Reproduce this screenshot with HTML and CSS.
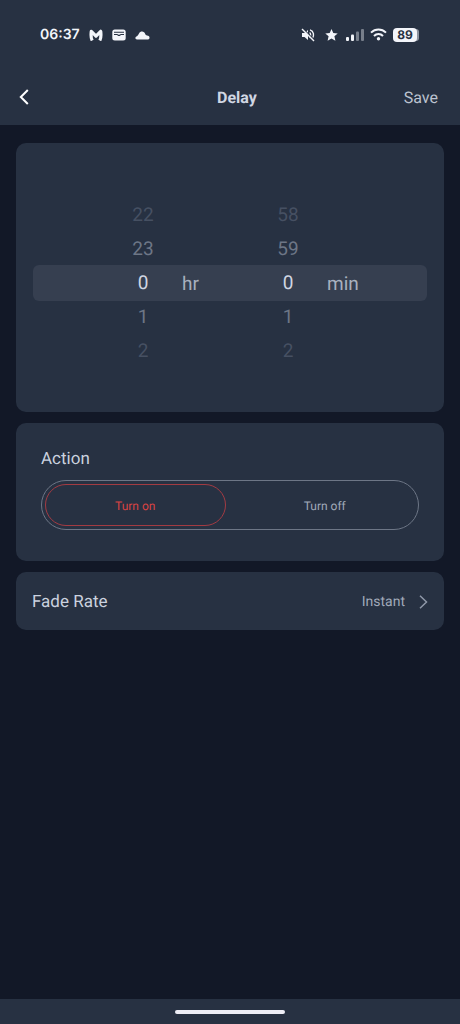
FILE: index.html
```html
<!DOCTYPE html>
<html lang="en">
<head>
<meta charset="utf-8">
<meta name="viewport" content="width=device-width, initial-scale=1">
<title>Delay</title>
<link rel="stylesheet" href="styles.css">
</head>
<body>
<header class="top">
  <div class="status">
    <div class="status-left">
      <span class="clock">06:37</span>
      <svg width="14" height="12" viewBox="0 0 14 12" fill="none" stroke="currentColor" stroke-width="3.200" stroke-linejoin="round"><path d="M3.200 11.500C1.800 9 1.900 5.500 2.300 2.300L7 7.200l4.700-4.900c.4 3.200.5 6.700-.9 9.200"/></svg>
      <svg width="14" height="12" viewBox="0 0 14 12"><rect x=".3" y=".5" width="13.400" height="11" rx="2.500" fill="currentColor"/><path d="M2 3.300h10M2 5.500h3c1 0 1 1 2 1s1-1 2-1h3" fill="none" stroke="#273142" stroke-width="1.100"/></svg>
      <svg width="15" height="10" viewBox="0 0 15 10" fill="currentColor"><path d="M2 9.500C-.2 9.300-.1 6.600 2 6.200 2.600 5.900 3.200 5 4 3.500 5.500.6 9.500 1 10.300 4.200c.4.900 1.400 1.300 2.700 1.600 2 .5 2 3.500 0 3.700z"/></svg>
    </div>
    <div class="status-right">
      <svg width="14" height="14" viewBox="0 0 14 14" fill="none" stroke="currentColor" stroke-width="1.400"><path d="M1 5h2.500L7 2v10L3.500 9H1z" fill="currentColor" stroke="none"/><path d="M8.600 4.500c1.400 1 1.400 4 0 5M9 1.800c4 1.300 4.300 6 2.400 8.400"/><path d="M2 .6l12 12" stroke="#273142" stroke-width="1.200"/><path d="M1 1l12 12"/></svg>
      <svg class="star" width="13" height="12" viewBox="0 0 13 12" fill="currentColor"><path d="M6.500 0l1.800 4 4.400.4-3.300 2.900 1 4.400-3.900-2.300-3.900 2.300 1-4.400L.3 4.400 4.700 4z"/></svg>
      <svg class="signal" width="18" height="12" viewBox="0 0 18 12" fill="currentColor"><rect y="8" width="3" height="4" rx="1"/><rect x="5" y="5.500" width="3" height="6.500" rx="1"/><rect x="10" y="2.500" width="3" height="9.500" rx="1" opacity=".4"/><rect x="15" width="3" height="12" rx="1" opacity=".4"/></svg>
      <svg class="wifi" width="17" height="13" viewBox="0 0 17 13" fill="none" stroke="currentColor" stroke-width="2"><path d="M1 4.600c4.300-4.200 10.700-4.200 15 0M4 8c2.500-2.600 6.500-2.600 9 0"/><circle cx="8.500" cy="10.800" r="1.700" fill="currentColor" stroke="none"/></svg>
      <span class="battery">89</span>
    </div>
  </div>
  <nav class="bar">
    <button class="back" type="button" aria-label="Back"><svg width="10" height="16" viewBox="0 0 10 16" fill="none" stroke="currentColor" stroke-width="2"><path d="M8.800 1L1.800 8l7 7"/></svg></button>
    <h1 class="title">Delay</h1>
    <button class="save" type="button">Save</button>
  </nav>
</header>
<main class="content">
  <section class="card picker" aria-label="Delay time">
    <div class="wheels">
      <div class="wheel">
        <ul class="values" aria-label="Hours"><li class="far">22</li><li class="near">23</li><li class="current">0</li><li class="near">1</li><li class="far">2</li></ul>
        <span class="unit">hr</span>
      </div>
      <div class="wheel">
        <ul class="values" aria-label="Minutes"><li class="far">58</li><li class="near">59</li><li class="current">0</li><li class="near">1</li><li class="far">2</li></ul>
        <span class="unit">min</span>
      </div>
    </div>
  </section>
  <section class="card action">
    <h2 class="label" id="action-label">Action</h2>
    <div class="segments" role="radiogroup" aria-labelledby="action-label">
      <label class="segment"><input type="radio" name="action" value="on" checked><span>Turn on</span></label>
      <label class="segment"><input type="radio" name="action" value="off"><span>Turn off</span></label>
    </div>
  </section>
  <button class="card fade" type="button">
    <span class="label">Fade Rate</span>
    <span class="value">Instant</span>
    <svg width="9" height="14" viewBox="0 0 9 14" fill="none" stroke="currentColor" stroke-width="1.500"><path d="M1 .8L7.500 7 1 13.200"/></svg>
  </button>
</main>
<footer class="home"><div class="handle"></div></footer>
</body>
</html>
```
FILE: styles.css
```css
* {
  box-sizing: border-box;
}

body {
  margin: 0;
  min-height: 100vh;
  display: flex;
  flex-direction: column;
  background: #121827;
  color: #d0d6e2;
  font-family: Roboto, sans-serif;
  text-rendering: geometricPrecision;
}

button {
  border: 0;
  padding: 0;
  background: none;
  color: inherit;
  font: inherit;
  text-rendering: inherit;
  cursor: pointer;
}

h1,
h2,
ul {
  margin: 0;
  padding: 0;
  font-weight: 400;
  list-style: none;
}

svg {
  display: block;
  flex: none;
}

.top,
.home {
  background: #273142;
}

.status {
  height: 69px;
  padding: 0 43px 0 40px;
  display: flex;
  align-items: center;
  justify-content: space-between;
  color: #f3f5fa;
}

.status-left,
.status-right {
  display: flex;
  align-items: center;
}

.status-left {
  gap: 9px;
}

.clock {
  font: 600 14px/20px Inter, sans-serif;
}

.star {
  margin-left: 10px;
}

.signal {
  margin-left: 8px;
}

.wifi {
  margin: 0 6px;
}

.battery {
  width: 24px;
  border-radius: 4px;
  background: #f3f5fa;
  box-shadow: 3px 0 0 -1px #8c93a0;
  color: #273142;
  font: 700 12px/14px Inter, sans-serif;
  text-align: center;
}

.bar {
  height: 56px;
  padding-right: 22px;
  display: flex;
  align-items: center;
  justify-content: space-between;
}

.back {
  width: 70px;
  height: 56px;
  padding-left: 19px;
  color: #fff;
}

.title,
.save {
  padding-top: 2px;
  font-size: 16px;
  line-height: 24px;
}

.title {
  font-weight: 700;
}

.save {
  color: #bcc3d0;
}

.content {
  flex: 1;
  padding: 18px 16px;
  display: flex;
  flex-direction: column;
  gap: 11px;
}

.card {
  border-radius: 10px;
  background: #273142;
}

.picker {
  padding: 55px 17px 44px;
}

.wheels {
  position: relative;
  display: flex;
  justify-content: center;
}

.wheels::before {
  content: "";
  position: absolute;
  inset: 67px 0;
  border-radius: 6px;
  background: #363f50;
}

.wheel {
  position: relative;
  width: 145px;
  padding-left: 39px;
  display: flex;
  align-items: center;
  gap: 20px;
  font-size: 19px;
  line-height: 34px;
}

.values {
  width: 38px;
  text-align: center;
}

.near {
  color: #6d7686;
}

.far {
  color: #465062;
}

.unit {
  padding-top: 2px;
  color: #a8b0be;
}

.action {
  padding: 24px 25px 31px;
}

.label {
  font-size: 17px;
  line-height: 24px;
  color: #cbd2df;
}

.segments {
  height: 50px;
  margin-top: 9px;
  padding: 3px;
  display: flex;
  gap: 9px;
  border: 1px solid #6d7686;
  border-radius: 25px;
}

.segment {
  flex: 1;
  padding-top: 2px;
  display: flex;
  align-items: center;
  justify-content: center;
  border: 1px solid transparent;
  border-radius: 21px;
  color: #a0a9b9;
  font-size: 12px;
  line-height: 20px;
  cursor: pointer;
}

.segment input {
  position: absolute;
  opacity: 0;
}

.segment:has(input:checked) {
  border-color: #a33b42;
  color: #d94343;
}

.fade {
  padding: 17px 16px 16px;
  display: flex;
  align-items: center;
  text-align: left;
}

.fade .label {
  flex: 1;
  padding-top: 1px;
}

.value {
  padding-top: 1px;
  margin-right: 14px;
  font-size: 14px;
  line-height: 24px;
  color: #a0a9b9;
}

.fade svg {
  color: #8f98a8;
}

.home {
  height: 25px;
  display: flex;
  align-items: center;
  justify-content: center;
}

.handle {
  width: 110px;
  height: 4px;
  border-radius: 2px;
  background: #eeeef6;
}
```
